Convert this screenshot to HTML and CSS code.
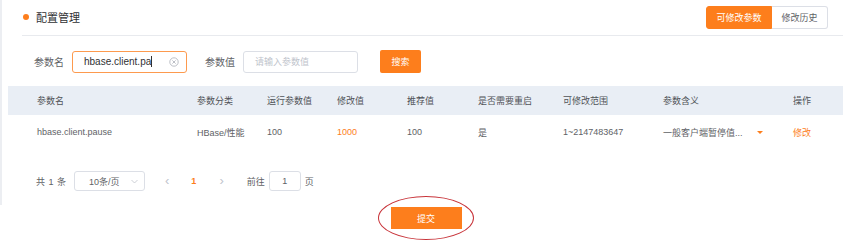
FILE: index.html
```html
<!DOCTYPE html>
<html lang="zh">
<head>
  <meta charset="UTF-8">
  <title>配置管理</title>
  <link rel="stylesheet" href="styles.css">
</head>
<body>
    <div class="card">
        <div class="header">
            <div class="title"><span class="dot"></span>配置管理</div>
            <div class="tabs">
                <button class="tab active">可修改参数</button>
                <button class="tab">修改历史</button>
            </div>
        </div>

        <div class="search">
            <label>参数名</label>
            <div class="input focus">
                <span>hbase.client.pa<i class="cursor"></i></span>
                <svg class="clear" width="10" height="10" viewBox="0 0 10 10">
                    <circle cx="5" cy="5" r="4.2" fill="none" stroke="#b4b8bf" stroke-width="0.9"/>
                    <path d="M3.4 3.4 L6.6 6.6 M6.6 3.4 L3.4 6.6" stroke="#b4b8bf" stroke-width="0.9"/>
                </svg>
            </div>
            <label class="gap">参数值</label>
            <div class="input"><span class="placeholder">请输入参数值</span></div>
            <button class="btn-search">搜索</button>
        </div>

        <div class="table">
            <div class="row head">
                <div>参数名</div>
                <div>参数分类</div>
                <div>运行参数值</div>
                <div>修改值</div>
                <div>推荐值</div>
                <div>是否需要重启</div>
                <div>可修改范围</div>
                <div>参数含义</div>
                <div>操作</div>
            </div>
            <div class="row">
                <div>hbase.client.pause</div>
                <div>HBase/性能</div>
                <div>100</div>
                <div class="orange">1000</div>
                <div>100</div>
                <div>是</div>
                <div>1~2147483647</div>
                <div class="meaning">一般客户端暂停值...<span class="caret"></span></div>
                <div class="orange">修改</div>
            </div>
        </div>

        <div class="pager">
            <span class="total">共 1 条</span>
            <div class="select">10条/页
                <svg width="7" height="5" viewBox="0 0 7 5"><path d="M0.5 1 L3.5 4 L6.5 1" fill="none" stroke="#c0c4cc" stroke-width="0.8"/></svg>
            </div>
            <span class="arrow">&lsaquo;</span>
            <span class="page-num">1</span>
            <span class="arrow">&rsaquo;</span>
            <span class="goto">前往</span>
            <div class="page-input">1</div>
            <span>页</span>
        </div>
    </div>

    <div class="footer">
        <div class="submit-wrap">
            <button class="btn-submit">提交</button>
            <span class="ring"></span>
        </div>
    </div>
</body>
</html>
```

FILE: styles.css
```css
* {
    margin: 0;
    padding: 0;
    box-sizing: border-box;
    font-family: "Liberation Sans", "Noto Sans CJK SC", sans-serif;
}
body {
    width: 850px;
    height: 244px;
    background: #fff;
    color: #606266;
    font-size: 9px;
    overflow: hidden;
}
.card {
    border-left: 2px solid #eceef2;
    height: 205px;
}
.header {
    display: flex;
    justify-content: space-between;
    align-items: center;
    height: 36px;
    margin: 0 7px 0 20px;
    padding-right: 15px;
    border-bottom: 1px solid #e8eaee;
}
.title {
    display: flex;
    align-items: center;
    font-size: 11px;
    color: #303133;
    margin-top: -2px;
}
.dot {
    width: 6px;
    height: 6px;
    border-radius: 50%;
    background: #fd7e1c;
    margin: 0 7px 0 1px;
}
.tabs {
    display: flex;
    margin-top: -1px;
}
.tab {
    height: 23px;
    font-size: 9px;
    border: 1px solid #dcdfe6;
    background: #fff;
    color: #606266;
    padding: 0 10px;
    border-radius: 0 3px 3px 0;
}
.tab.active {
    width: 66px;
    padding: 0;
    background: #fd7e1c;
    border-color: #fd7e1c;
    color: #fff;
    border-radius: 3px 0 0 3px;
}
.tab + .tab {
    width: 56px;
    padding: 0;
    border-left: none;
}
.search {
    display: flex;
    align-items: center;
    margin: 14px 0 0 32px;
    height: 23px;
}
.search label {
    font-size: 10px;
    color: #606266;
    width: 38px;
}
.search label.gap {
    margin-left: 18px;
}
.input {
    display: flex;
    align-items: center;
    justify-content: space-between;
    width: 115px;
    height: 22px;
    border: 1px solid #dcdfe6;
    border-radius: 3px;
    padding: 0 7px 0 11px;
    font-size: 10px;
    color: #303133;
}
.input.focus {
    border-color: #fd9a4e;
}
.cursor {
    display: inline-block;
    width: 1px;
    height: 11px;
    background: #303133;
    vertical-align: -2px;
}
.input .placeholder {
    font-size: 9px;
    color: #c0c4cc;
}
.btn-search {
    margin-left: 22px;
    width: 41px;
    height: 23px;
    background: #fd7e1c;
    border: none;
    border-radius: 2px;
    color: #fff;
    font-size: 9px;
}
.table {
    margin: 13px 7px 0 6px;
}
.row {
    display: grid;
    grid-template-columns: 160px 70px 70px 70px 71px 85px 100px 130px 1fr;
    align-items: center;
    padding-left: 29px;
    height: 34px;
    font-size: 9px;
    color: #606266;
}
.row.head {
    height: 29px;
    background: #e9eef5;
    color: #505358;
}
.orange {
    color: #fd7e1c;
}
.meaning {
    display: flex;
    align-items: center;
}
.caret {
    width: 0;
    height: 0;
    border-left: 3px solid transparent;
    border-right: 3px solid transparent;
    border-top: 3px solid #fd7e1c;
    margin-left: 14px;
    margin-top: 1px;
}
.pager {
    display: flex;
    align-items: center;
    margin: 22px 0 0 34px;
    height: 20px;
    font-size: 9px;
    color: #606266;
}
.total {
    word-spacing: 1px;
}
.select {
    display: flex;
    align-items: center;
    justify-content: space-between;
    width: 71px;
    height: 20px;
    margin-left: 8px;
    border: 1px solid #dcdfe6;
    border-radius: 3px;
    padding: 0 6px 0 14px;
}
.arrow {
    font-size: 13px;
    color: #c0c4cc;
    margin: 0 0 2px 20px;
}
.page-num {
    color: #fd7e1c;
    font-weight: bold;
    margin-left: 22px;
    margin-right: 3px;
}
.goto {
    margin-left: 23px;
}
.page-input {
    width: 32px;
    height: 20px;
    margin: 0 4px 0 4px;
    border: 1px solid #dcdfe6;
    border-radius: 3px;
    display: flex;
    align-items: center;
    justify-content: center;
}
.footer {
    display: flex;
    justify-content: center;
    padding: 2px 0 0 2px;
}
.submit-wrap {
    position: relative;
}
.btn-submit {
    width: 71px;
    height: 22px;
    background: #fd7e1c;
    border: none;
    color: #fff;
    font-size: 9px;
}
.ring {
    position: absolute;
    left: -13px;
    top: -11px;
    width: 96px;
    height: 44px;
    border: 1px solid #c8343a;
    border-radius: 50%;
}
```
